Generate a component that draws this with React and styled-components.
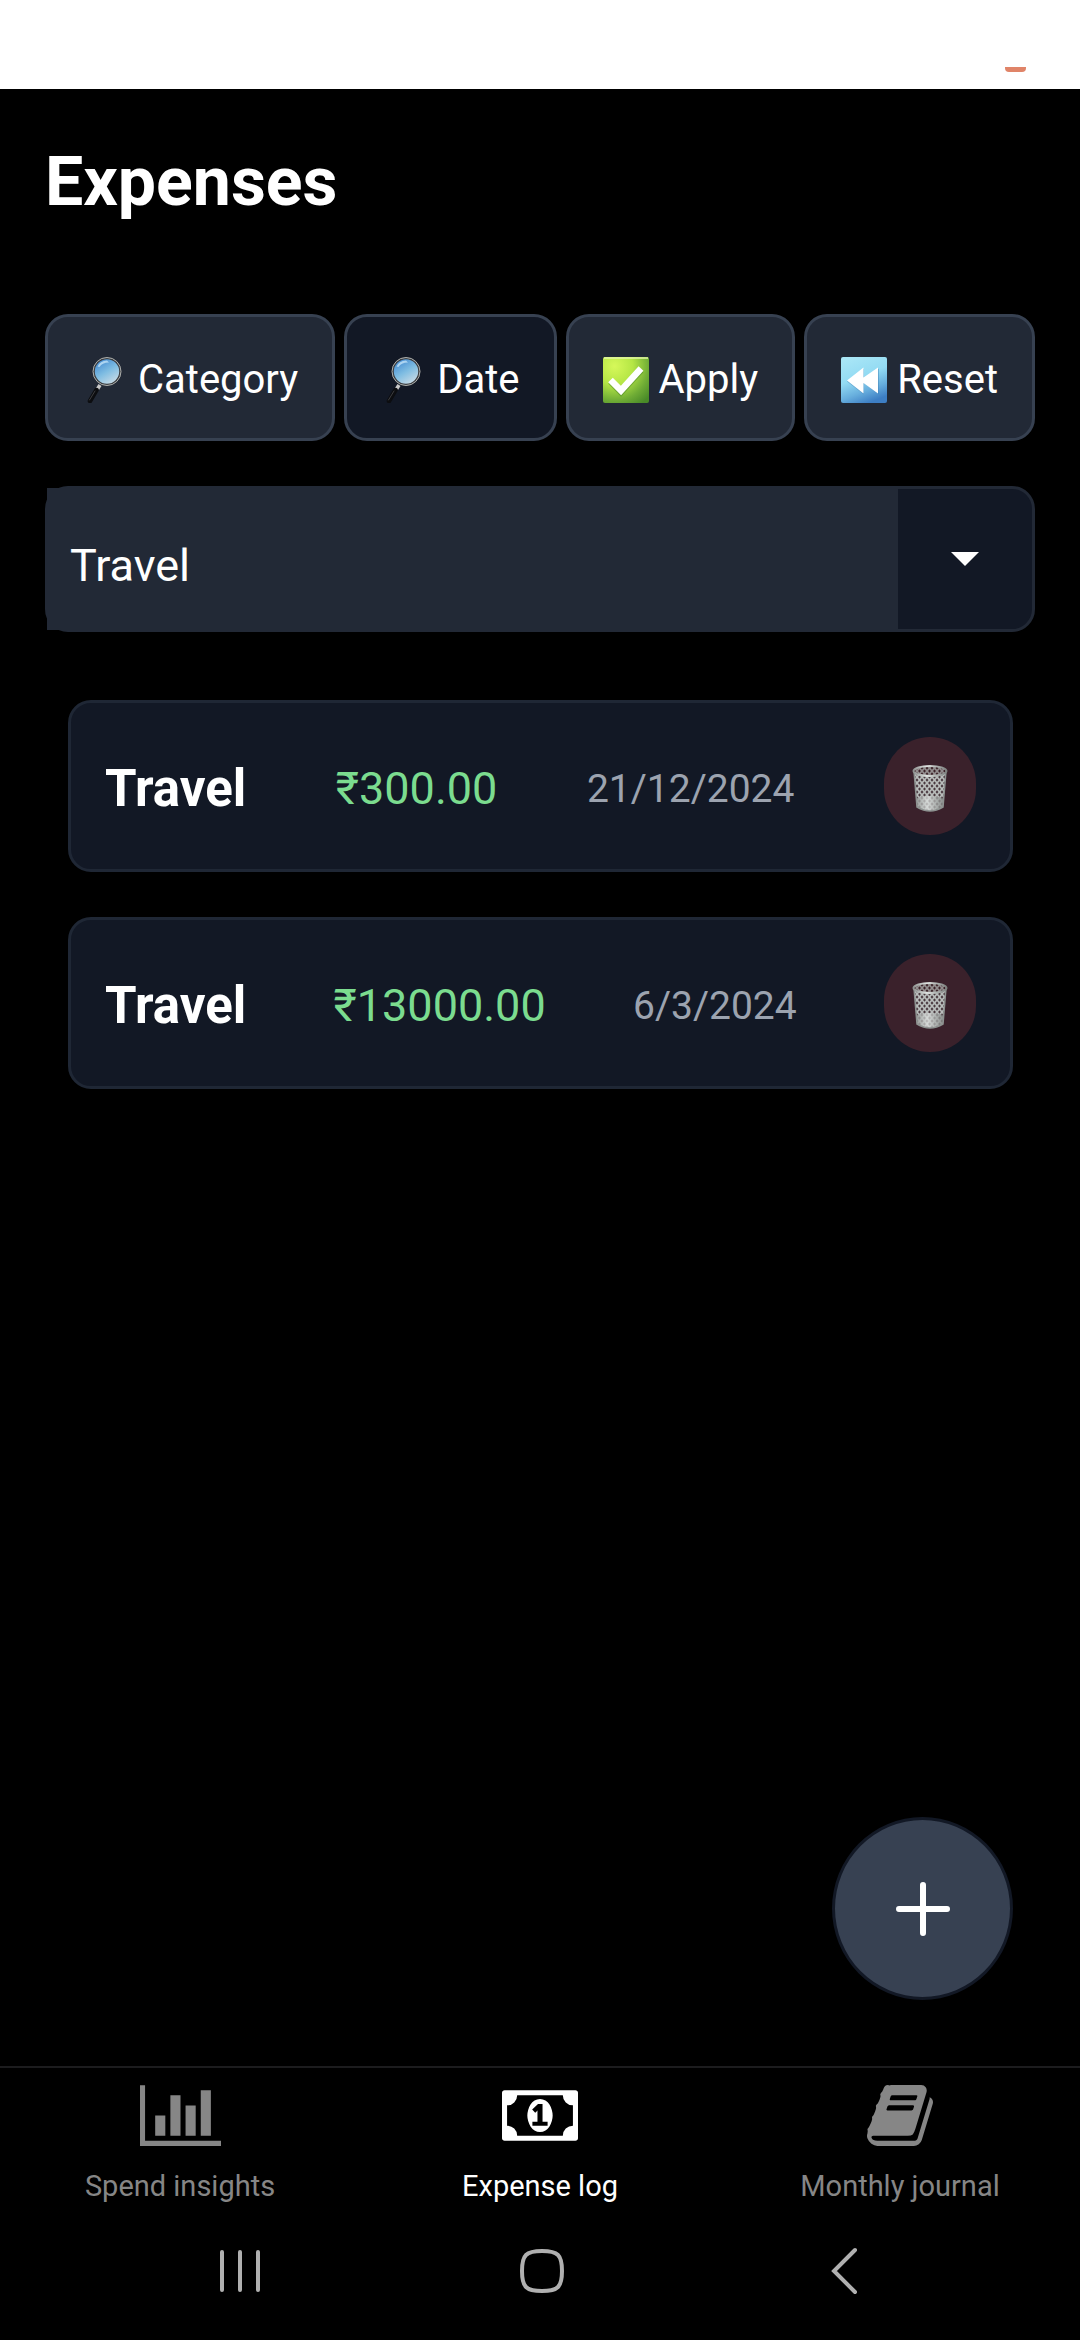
import React, { useState } from "react";
import styled, { createGlobalStyle } from "styled-components";

const GlobalStyle = createGlobalStyle`
  *, *::before, *::after { box-sizing: border-box; }
  body {
    margin: 0;
    background: #000;
    color: #fff;
    font-family: Roboto, "Noto Sans", sans-serif;
  }
  button, select { font: inherit; color: inherit; margin: 0; }
  svg { display: block; flex: none; }
`;

const Screen = styled.div`
  min-height: 100vh;
  display: flex;
  flex-direction: column;
`;

const StatusBar = styled.header`
  height: 89px;
  padding: 0 54px 17px;
  background: #fff;
  display: flex;
  justify-content: flex-end;
  align-items: flex-end;
`;

const StatusMark = styled.span`
  width: 21px;
  height: 5px;
  border-radius: 0 0 4px 4px;
  background: #e08468;
`;

const Main = styled.main`
  flex: 1;
  display: flex;
  flex-direction: column;
  padding: 53px 45px 66px;
`;

const Title = styled.h1`
  margin: 0 0 92px;
  font-size: 68px;
  line-height: 80px;
  font-weight: 700;
`;

const Filters = styled.div`
  display: flex;
  gap: 9px;
  margin-bottom: 45px;
`;

const FilterButton = styled.button`
  flex: 1 1 auto;
  display: flex;
  align-items: center;
  justify-content: center;
  gap: 10px;
  padding: 38px 30px 34px;
  border: 3px solid #374151;
  border-radius: 23px;
  background: ${(p) => (p.$active ? "#121825" : "#222936")};
  font-size: 40px;
  line-height: 49px;
  white-space: nowrap;
`;

const SelectField = styled.div`
  display: grid;
  grid-template-columns: 1fr 134px;
  border: 3px solid #222936;
  border-radius: 23px;
  background: #121825;
  margin-bottom: 68px;
`;

const Select = styled.select`
  appearance: none;
  height: 142px;
  margin: -1px 0 -1px -1px;
  padding: 12px 23px 0;
  border: 0;
  border-radius: 0;
  background: #222936;
  font-size: 45px;
  outline: none;
`;

const Caret = styled.span`
  display: flex;
  align-items: center;
  justify-content: center;
`;

const List = styled.ul`
  list-style: none;
  margin: 0;
  padding: 0 22px 0 23px;
  display: flex;
  flex-direction: column;
  gap: 45px;
`;

const Card = styled.li`
  display: flex;
  align-items: center;
  justify-content: space-between;
  padding: 34px;
  border: 3px solid #1f2735;
  border-radius: 23px;
  background: #121825;
`;

const CardText = styled.span`
  padding-top: 5px;
  line-height: 60px;
`;

const Name = styled(CardText)`
  font-size: 51px;
  font-weight: 700;
`;

const Amount = styled(CardText)`
  font-size: 45px;
  color: #7bdc8f;
`;

const When = styled(CardText)`
  font-size: 39px;
  color: #9ca3af;
`;

const DeleteButton = styled.button`
  display: flex;
  align-items: center;
  justify-content: center;
  width: 92px;
  height: 98px;
  padding: 5px 0 0;
  border: 0;
  border-radius: 46px;
  background: #3a212b;
`;

const AddButton = styled.button`
  align-self: flex-end;
  display: flex;
  align-items: center;
  justify-content: center;
  width: 181px;
  height: 183px;
  margin: auto 22px 0 0;
  padding: 0;
  border: 3px solid #121825;
  border-radius: 50%;
  background: #374152;
`;

const Tabs = styled.nav`
  display: grid;
  grid-template-columns: repeat(3, 1fr);
  padding-top: 12px;
  border-top: 2px solid #1c1c1e;
`;

const Tab = styled.a`
  display: flex;
  flex-direction: column;
  align-items: center;
  gap: 18px;
  color: ${(p) => (p.$active ? "#fff" : "#868686")};
  font-size: 29px;
  line-height: 34px;
  text-decoration: none;
`;

const SystemNav = styled.footer`
  display: grid;
  grid-template-columns: repeat(3, 1fr);
  padding: 44px 85px 45px 89px;
  color: #b0b0b0;
`;

const SystemButton = styled.button`
  display: flex;
  justify-content: center;
  padding: 0;
  border: 0;
  background: none;
  color: inherit;
`;

const Magnifier = () => (
  <svg width="46" height="46" viewBox="0 0 46 46" aria-hidden="true">
    <defs>
      <linearGradient id="lens" x1="0.2" y1="0" x2="0.8" y2="1">
        <stop offset="0" stopColor="#3f86d0" />
        <stop offset="0.5" stopColor="#7fbde2" />
        <stop offset="1" stopColor="#d3dfe6" />
      </linearGradient>
    </defs>
    <path d="M18 28 L15.500 32" stroke="#c9c9c9" strokeWidth="3.500" />
    <path d="M14.500 33 L8 44" stroke="#0c0d10" strokeWidth="4.500" strokeLinecap="round" />
    <path d="M13 34 L7.500 43" stroke="#3d3d40" strokeWidth="1" strokeLinecap="round" />
    <circle cx="25" cy="14.500" r="13.200" fill="url(#lens)" stroke="#3b3d40" strokeWidth="2" />
    <circle cx="25" cy="14.500" r="14" fill="none" stroke="#aeb0ae" strokeWidth="1" />
    <path d="M15.500 9.500 Q18 4 25 3.500 L27 5.500 Q20 5.500 17.500 10Z" fill="#c2e2f7" opacity="0.8" />
  </svg>
);

const CheckMark = () => (
  <svg width="46" height="46" viewBox="0 0 46 46" aria-hidden="true">
    <defs>
      <radialGradient id="leaf" cx="0.25" cy="0.2" r="1">
        <stop offset="0" stopColor="#d6f85a" />
        <stop offset="0.4" stopColor="#b5e645" />
        <stop offset="0.75" stopColor="#6fac35" />
        <stop offset="1" stopColor="#498a28" />
      </radialGradient>
    </defs>
    <rect x="0" y="0" width="46" height="46" rx="2" fill="url(#leaf)" />
    <path d="M1 1H45" stroke="#e3f6a6" strokeWidth="1.500" />
    <path d="M7.500 24.500 L18 35 L38 13" fill="none" stroke="#3f7a22" strokeWidth="6.500" opacity="0.45" />
    <path d="M7.500 23 L18 33.500 L38 11.500" fill="none" stroke="#fff" strokeWidth="6.500" />
  </svg>
);

const Rewind = () => (
  <svg width="46" height="46" viewBox="0 0 46 46" aria-hidden="true">
    <defs>
      <linearGradient id="sky" x1="0.2" y1="0" x2="0.6" y2="1">
        <stop offset="0" stopColor="#a9e6f6" />
        <stop offset="0.45" stopColor="#93dbf3" />
        <stop offset="0.75" stopColor="#67aedd" />
        <stop offset="1" stopColor="#3d7ec4" />
      </linearGradient>
    </defs>
    <rect x="0" y="0" width="46" height="46" rx="2" fill="url(#sky)" />
    <path d="M6 24.500 L23 11.500 V37.500Z M21 24.500 L38 11.500 V37.500Z" fill="#3b7fb4" opacity="0.45" />
    <path d="M6 23.500 L22.500 10.500 V20.500 L37 10.500 V36.500 L22.500 26 V36.500Z" fill="#fff" />
  </svg>
);

const Basket = () => (
  <svg width="36" height="47" viewBox="0 0 36 47" aria-hidden="true">
    <defs>
      <pattern id="mesh" width="5" height="6" patternUnits="userSpaceOnUse">
        <path d="M0 0L5 6M5 0L0 6" stroke="#b9bdbb" strokeWidth="1.700" />
      </pattern>
      <linearGradient id="shade" x1="0" y1="0" x2="1" y2="0">
        <stop offset="0" stopColor="#8f9391" />
        <stop offset="0.4" stopColor="#dfe3e1" />
        <stop offset="1" stopColor="#7d817f" />
      </linearGradient>
    </defs>
    <path d="M2 6 L5 42 Q18 50 31 42 L34 6Z" fill="#4a3a40" />
    <path d="M2 6 L5 42 Q18 50 31 42 L34 6Z" fill="url(#mesh)" />
    <path d="M4.500 33 Q18 29 31.500 33 L31 42 Q18 50 5 42Z" fill="url(#shade)" opacity="0.75" />
    <path d="M2 6 L5 42 Q18 50 31 42 L34 6" fill="none" stroke="#8d9290" strokeWidth="1.500" />
    <ellipse cx="18" cy="6" rx="16.500" ry="5" fill="#3b2228" />
    <ellipse cx="18" cy="6" rx="16.500" ry="5" fill="url(#mesh)" opacity="0.7" />
    <ellipse cx="18" cy="6" rx="16.500" ry="5" fill="none" stroke="url(#shade)" strokeWidth="2" />
  </svg>
);

const ChartIcon = () => (
  <svg width="81" height="71" viewBox="0 0 2048 1792" fill="currentColor" aria-hidden="true">
    <path d="M640 896v512h-256v-512h256zM1024 384v1024h-256v-1024h256zM2048 1536v128h-2048v-1536h128v1408h1920zM1408 640v768h-256v-768h256zM1792 256v1152h-256v-1152h256z" />
  </svg>
);

const MoneyIcon = () => (
  <svg width="76" height="71" viewBox="0 0 1920 1792" fill="currentColor" fillRule="evenodd" aria-hidden="true">
    <path d="M768 1152h384v-96h-128v-448h-114l-148 137 77 80q42-37 55-57h2v288h-128v96zM1280 896q0 70-21 142t-59.500 134-101.500 101-138 39-138-39-101.500-101-59.500-134-21-142 21-142 59.500-134 101.500-101 138-39 138 39 101.500 101 59.500 134 21 142zM1792 1152v-512q-106 0-181-75t-75-181h-1152q0 106-75 181t-181 75v512q106 0 181 75t75 181h1152q0-106 75-181t181-75zM1920 320v1152q0 26-19 45t-45 19h-1792q-26 0-45-19t-19-45v-1152q0-26 19-45t45-19h1792q26 0 45 19t19 45z" />
  </svg>
);

const BookIcon = () => (
  <svg width="66" height="71" viewBox="0 0 1664 1792" fill="currentColor" fillRule="evenodd" aria-hidden="true">
    <path d="M1639 478q40 57 18 129l-275 906q-19 64-76.500 107.500t-122.500 43.500h-923q-77 0-148.500-53.500t-99.500-131.500q-24-67-2-127 0-4 3-27t4-37q1-8-3-21.500t-3-19.500q2-11 8-21t16.500-23.500 16.500-23.500q23-38 45-91.500t30-91.500q3-10 .5-30t-.5-28q3-11 17-28t17-23q21-36 42-92t25-90q1-9-2.500-32t.5-28q4-13 22-30.500t22-22.500q19-26 42.500-84.500t27.500-96.500q1-8-3-25.500t-2-26.500q2-8 9-18t18-23 17-21q8-12 16.500-30.500t15-35 16-36 19.500-32 26.500-23.500 36-11.500 47.500 5.500l-1 3q38-9 51-9h761q74 0 114 56t18 130l-274 906q-36 119-71.500 153.500t-128.500 34.500h-869q-27 0-38 15-11 16-1 43 24 70 144 70h923q29 0 56-15.500t35-41.500l300-987q7-22 5-57 38 15 59 43zM575 480q-4 13 2 22.500t20 9.500h608q13 0 25.500-9.500t16.500-22.500l21-64q4-13-2-22.500t-20-9.500h-608q-13 0-25.500 9.500t-16.500 22.500zM492 736q-4 13 2 22.500t20 9.500h608q13 0 25.500-9.500t16.500-22.500l21-64q4-13-2-22.500t-20-9.500h-608q-13 0-25.500 9.500t-16.500 22.500z" />
  </svg>
);

const filters = [
  { label: "Category", Icon: Magnifier },
  { label: "Date", Icon: Magnifier, active: true },
  { label: "Apply", Icon: CheckMark },
  { label: "Reset", Icon: Rewind },
];

const expenses = [
  { name: "Travel", amount: "₹300.00", date: "21/12/2024", iso: "2024-12-21" },
  { name: "Travel", amount: "₹13000.00", date: "6/3/2024", iso: "2024-03-06" },
];

const tabs = [
  { label: "Spend insights", href: "#insights", Icon: ChartIcon },
  { label: "Expense log", href: "#log", Icon: MoneyIcon, active: true },
  { label: "Monthly journal", href: "#journal", Icon: BookIcon },
];

const systemButtons = [
  { label: "Recent apps", path: "M6 5V43M24 5V43M42 5V43" },
  { label: "Home", path: "M24 4C40 4 44 8 44 24S40 44 24 44S4 40 4 24S8 4 24 4Z" },
  { label: "Back", path: "M35 3L14 24L35 45" },
];

export default function App() {
  const [category, setCategory] = useState("Travel");
  return (
    <>
      <GlobalStyle />
      <Screen>
        <StatusBar>
          <StatusMark />
        </StatusBar>
        <Main>
          <Title>Expenses</Title>
          <Filters>
            {filters.map(({ label, Icon, active }) => (
              <FilterButton key={label} type="button" $active={active}>
                <Icon />
                {label}
              </FilterButton>
            ))}
          </Filters>
          <SelectField>
            <Select
              aria-label="Category"
              value={category}
              onChange={(e) => setCategory(e.target.value)}
            >
              <option>Travel</option>
            </Select>
            <Caret>
              <svg width="28" height="14" viewBox="0 0 28 14" aria-hidden="true">
                <path d="M0 0H28L14 14Z" fill="#fff" />
              </svg>
            </Caret>
          </SelectField>
          <List>
            {expenses.map((item) => (
              <Card key={item.iso}>
                <Name>{item.name}</Name>
                <Amount>{item.amount}</Amount>
                <When as="time" dateTime={item.iso}>{item.date}</When>
                <DeleteButton type="button" aria-label={`Delete ${item.name} ${item.date}`}>
                  <Basket />
                </DeleteButton>
              </Card>
            ))}
          </List>
          <AddButton type="button" aria-label="Add expense">
            <svg width="54" height="54" viewBox="0 0 54 54" aria-hidden="true">
              <path d="M27 3V51M3 27H51" stroke="#fff" strokeWidth="6" strokeLinecap="round" />
            </svg>
          </AddButton>
        </Main>
        <Tabs>
          {tabs.map(({ label, href, Icon, active }) => (
            <Tab key={label} href={href} $active={active}>
              <Icon />
              {label}
            </Tab>
          ))}
        </Tabs>
        <SystemNav>
          {systemButtons.map(({ label, path }) => (
            <SystemButton key={label} type="button" aria-label={label}>
              <svg width="48" height="48" viewBox="0 0 48 48" aria-hidden="true">
                <path d={path} fill="none" stroke="currentColor" strokeWidth="4" strokeLinecap="round" />
              </svg>
            </SystemButton>
          ))}
        </SystemNav>
      </Screen>
    </>
  );
}
